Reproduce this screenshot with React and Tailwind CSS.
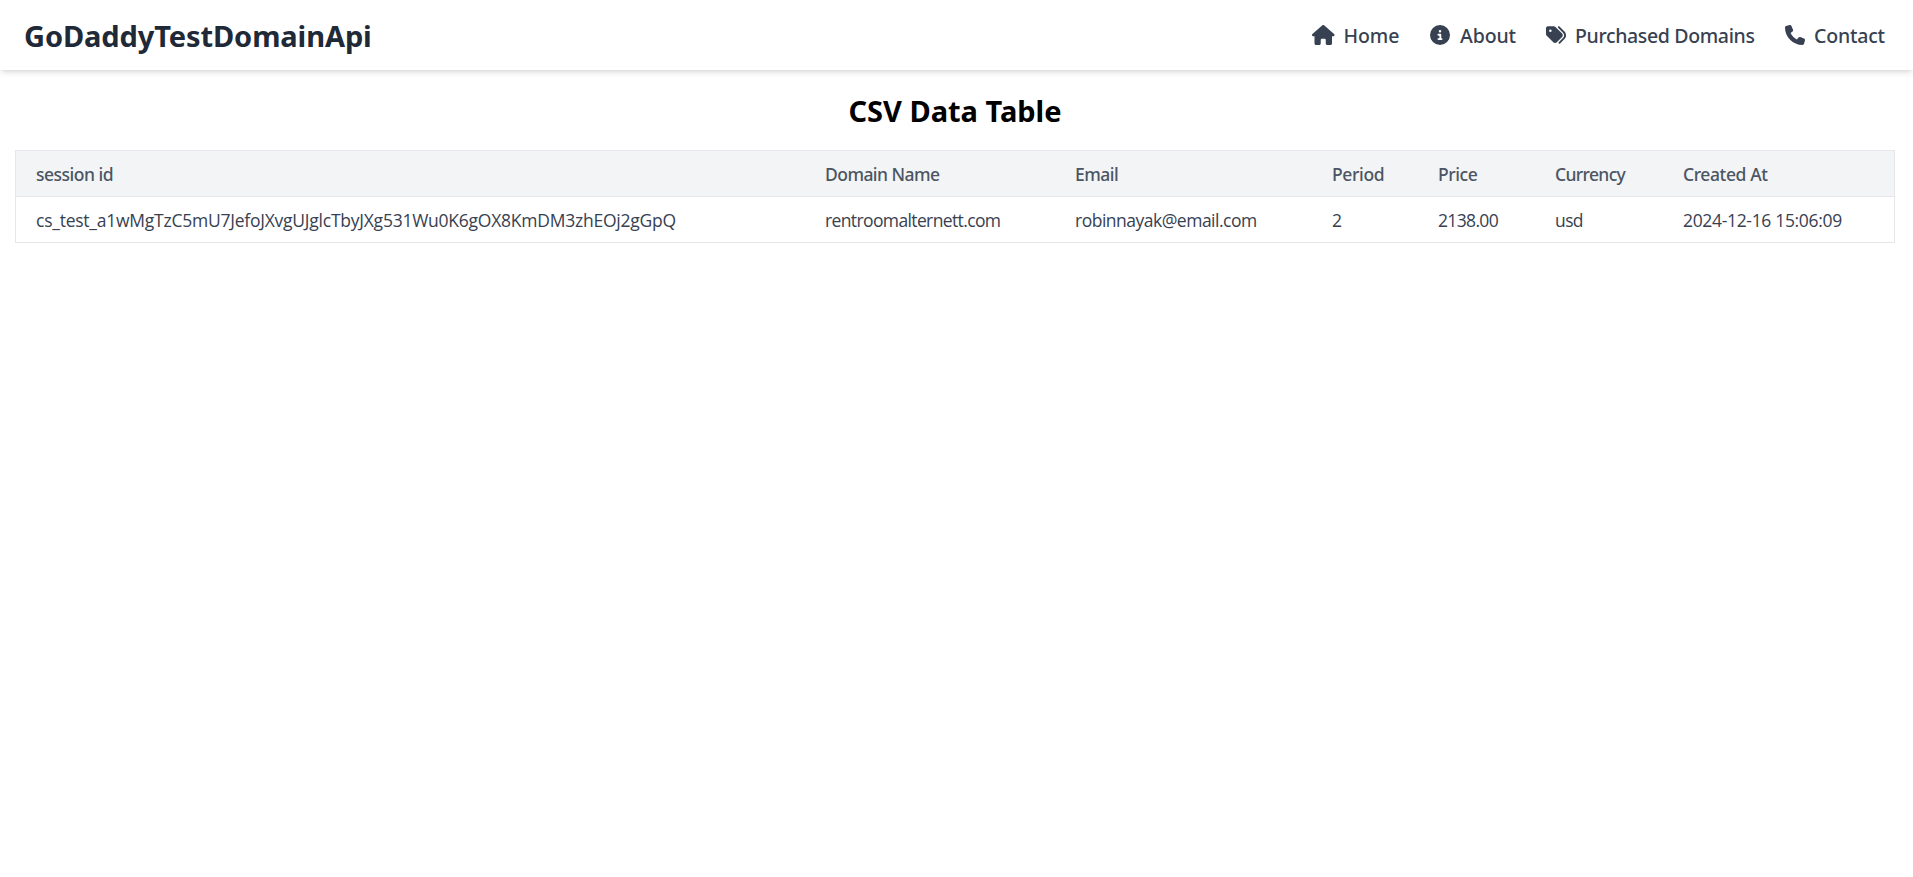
import { FaCircleInfo, FaTags, FaPhone } from "react-icons/fa6";

function House({ className }) {
  return (
    <svg className={className} viewBox="0 0 576 512" fill="currentColor" aria-hidden="true">
      <path d="M575.8 255.5c0 18-15 32.1-32 32.1h-32l.7 160.2c0 2.7-.2 5.4-.5 8.1V472c0 22.1-17.9 40-40 40H456c-1.1 0-2.2 0-3.3-.1c-1.4 .1-2.8 .1-4.2 .1H416 392c-22.1 0-40-17.9-40-40V448 384c0-17.7-14.3-32-32-32H256c-17.7 0-32 14.3-32 32v64 24c0 22.1-17.9 40-40 40H160 128.1c-1.5 0-3-.1-4.5-.2c-1.2 .1-2.4 .2-3.6 .2H104c-22.1 0-40-17.9-40-40V360c0-.9 0-1.9 .1-2.8V287.6H32c-18 0-32-14-32-32.1c0-9 3-17 10-24L266.4 8c7-7 15-8 22-8s15 2 21 7L564.8 231.5c8 7 12 15 11 24z" />
    </svg>
  );
}

const links = [
  { label: "Home", Icon: House, size: "h-5 w-[22.5px]", box: "w-[118px]", gap: "gap-[9px]", spacing: "tracking-[-0.1px]" },
  { label: "About", Icon: FaCircleInfo, size: "size-5", box: "w-[116px]", gap: "gap-[10px]", spacing: "tracking-[-0.1px]" },
  { label: "Purchased Domains", Icon: FaTags, size: "size-5", box: "w-[239px]", gap: "gap-[9px]", spacing: "tracking-[-0.35px]" },
  { label: "Contact", Icon: FaPhone, size: "size-5", box: "w-[102px]", gap: "gap-[9px]", spacing: "tracking-[-0.2px]" },
];

const columns = [
  { title: "session id", width: "w-[789px]", head: "tracking-[-0.5px]", value: "cs_test_a1wMgTzC5mU7JefoJXvgUJglcTbyJXg531Wu0K6gOX8KmDM3zhEOj2gGpQ", cell: "tracking-[-0.24px]" },
  { title: "Domain Name", width: "w-[250px]", head: "tracking-[-0.55px]", value: "rentroomalternett.com", cell: "tracking-[-0.62px]" },
  { title: "Email", width: "w-[257px]", head: "tracking-[-0.5px]", value: "robinnayak@email.com", cell: "tracking-[-0.5px]" },
  { title: "Period", width: "w-[106px]", head: "tracking-[-0.35px]", value: "2", cell: "" },
  { title: "Price", width: "w-[117px]", head: "tracking-[-0.4px]", value: "2138.00", cell: "tracking-[-0.65px]" },
  { title: "Currency", width: "w-[128px]", head: "tracking-[-0.65px]", value: "usd", cell: "tracking-[-0.6px]" },
  { title: "Created At", width: "w-[231px]", head: "tracking-[-0.4px]", value: "2024-12-16 15:06:09", cell: "tracking-[-0.33px]" },
];

function Navbar() {
  return (
    <header className="flex h-[70px] items-center justify-between bg-white pl-6 pr-[26px] shadow-[0_4px_6px_-1px_rgba(0,0,0,0.1),0_2px_4px_-2px_rgba(0,0,0,0.1)]">
      <div className="pt-[2px] text-[29px] leading-9 font-bold tracking-[-0.1px] text-[#1f2937]">GoDaddyTestDomainApi</div>
      <nav className="flex text-[#374151]">
        {links.map(({ label, Icon, size, box, gap, spacing }) => (
          <a key={label} href="#" className={`flex items-center ${box} ${gap}`}>
            <Icon className={`shrink-0 ${size}`} />
            <span className={`pt-[2px] text-[19.5px] leading-7 font-medium whitespace-nowrap ${spacing}`}>{label}</span>
          </a>
        ))}
      </nav>
    </header>
  );
}

export default function App() {
  return (
    <div className="min-h-screen bg-white font-['Noto_Sans',sans-serif]">
      <Navbar />
      <main className="pt-[23px] pr-[18px] pl-[15px]">
        <h1 className="mb-[21px] text-center text-[29px] leading-9 font-bold text-black">CSV Data Table</h1>
        <table className="w-[1880px] table-fixed border-separate border-spacing-0 border border-[#e5e7eb] text-left text-[17.5px] leading-7">
          <thead>
            <tr className="bg-[#f3f4f6] text-[#4b5563]">
              {columns.map((c) => (
                <th key={c.title} className={`h-[46px] border-b border-[#e5e7eb] pl-5 font-medium whitespace-nowrap ${c.width} ${c.head}`}>{c.title}</th>
              ))}
            </tr>
          </thead>
          <tbody>
            <tr className="font-['Open_Sans','Noto_Sans',sans-serif] text-[#374151]">
              {columns.map((c) => (
                <td key={c.title} className={`h-[45px] pl-5 whitespace-nowrap ${c.cell}`}>{c.value}</td>
              ))}
            </tr>
          </tbody>
        </table>
      </main>
    </div>
  );
}
